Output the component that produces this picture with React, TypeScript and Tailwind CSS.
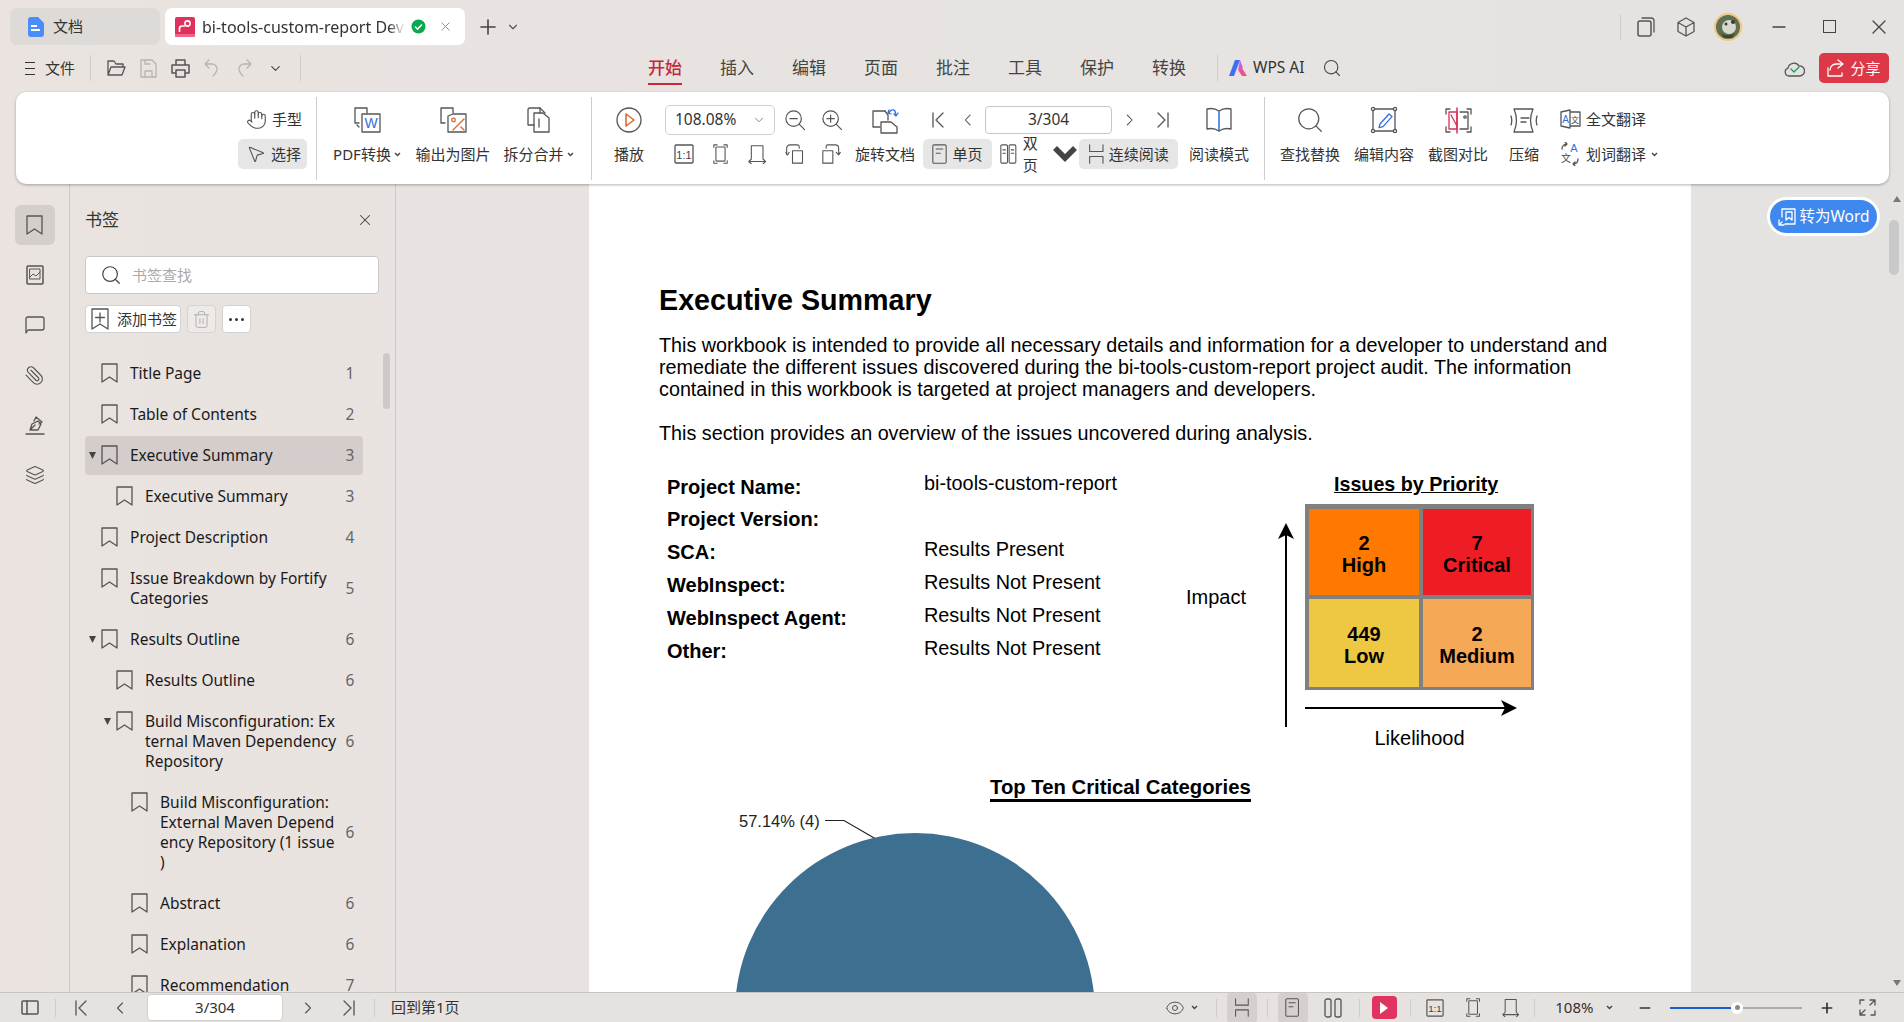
import * as React from "react";
import clsx from "clsx";
import {
  ChevronDown,
  ChevronLeft,
  ChevronRight,
  Eye,
  Hand,
  Layers,
  Minus,
  MousePointer2,
  Paperclip,
  Plus,
  Search,
  Trash2,
  X,
} from "lucide-react";

const ink = "#555555";

function Ic({ w, h, sw = 1.3, stroke = ink, children }: { w: number; h: number; sw?: number; stroke?: string; children: React.ReactNode }) {
  return (
    <svg width={w} height={h} viewBox={`0 0 ${w} ${h}`} fill="none" stroke={stroke} strokeWidth={sw} strokeLinecap="round" strokeLinejoin="round" className="shrink-0">
      {children}
    </svg>
  );
}

function Caret() {
  return (
    <svg width="7" height="5" viewBox="0 0 7 5" fill="none" stroke="#444" strokeWidth="1.4" className="shrink-0">
      <path d="M1 1l2.5 2.5L6 1" />
    </svg>
  );
}

function Sep({ className }: { className: string }) {
  return <div className={clsx("w-px shrink-0 bg-[#d0ccca]", className)} />;
}

function BackDoc() {
  return <path d="M13 6V1H1v15h4" />;
}

function PdfWordIcon() {
  return (
    <Ic w={27} h={26}>
      <BackDoc />
      <rect x="8" y="7" width="18" height="18" />
      <path d="M3 18l2 2" />
      <text x="17" y="21" textAnchor="middle" fontSize="14" fill="#2f6fe0" stroke="none" fontFamily="Liberation Sans">W</text>
    </Ic>
  );
}

function PdfImageIcon() {
  return (
    <Ic w={27} h={26}>
      <BackDoc />
      <path d="M8 25V9l5-2h13v18z" />
      <circle cx="13.5" cy="13" r="1.8" stroke="#d9652b" />
      <path d="M24 12L13 23" stroke="#d9652b" />
      <path d="M21 20l3 3" stroke="#d9652b" />
    </Ic>
  );
}

function SplitIcon() {
  return (
    <Ic w={24} h={26}>
      <path d="M13 6V1H3a2 2 0 00-2 2v15h6" />
      <path d="M13 1l5 5" />
      <path d="M7 6h9l6 5v14H7z" />
      <path d="M12 12v8" />
    </Ic>
  );
}

function PlayIcon() {
  return (
    <Ic w={26} h={26}>
      <circle cx="13" cy="13" r="12" />
      <path d="M10 7l8 6-8 6z" stroke="#d9652b" strokeWidth="1.5" />
    </Ic>
  );
}

function RotateDocIcon() {
  return (
    <Ic w={27} h={27}>
      <path d="M13 4H1v16h7" />
      <path d="M13 4l3 4v5" />
      <path d="M9 15h10l6 5v6H9z" />
      <path d="M17 6c1-3 4-4 6-2l1 4" stroke="#2f6fe0" />
      <path d="M17 3l-1 3 3 1M22 7l2 2 2-3" stroke="#2f6fe0" />
    </Ic>
  );
}

function BookIcon() {
  return (
    <Ic w={26} h={26}>
      <path d="M13 4C10 2 5 1 1 2v20c4-1 9 0 12 2 3-2 8-3 12-2V2c-4-1-9 0-12 2z" />
      <path d="M13 4v20" stroke="#2f6fe0" strokeWidth="1.5" />
    </Ic>
  );
}

function EditIcon() {
  return (
    <Ic w={28} h={28}>
      <path d="M5 3h18M5 25h18M3 5v18M25 5v18" />
      <circle cx="3" cy="3" r="1.6" />
      <circle cx="25" cy="3" r="1.6" />
      <circle cx="3" cy="25" r="1.6" />
      <circle cx="25" cy="25" r="1.6" />
      <path d="M10 18l9-10 3 2.6-9 10-4 1z" stroke="#2f6fe0" />
    </Ic>
  );
}

function CompareIcon() {
  return (
    <Ic w={27} h={27}>
      <path d="M5 2H1v5M22 2h4v5M5 25H1v-5M22 25h4v-5" />
      <path d="M4 5h8v17H4zM6 8l6 11" stroke="#d93052" />
      <path d="M12 1v25" stroke="#d93052" strokeWidth="1.5" />
      <path d="M15 5h8v17h-8" />
      <circle cx="20" cy="10" r="1.2" />
    </Ic>
  );
}

function CompressIcon() {
  return (
    <Ic w={28} h={27}>
      <path d="M4 2h19c-3 7-3 16 0 23H4c3-7 3-16 0-23z" />
      <path d="M11 11h8M11 15h5" />
      <path d="M1 9c1 3 1 6 0 9M27 9c-1 3-1 6 0 9" />
    </Ic>
  );
}

function OneToOneIcon() {
  return (
    <Ic w={20} h={20}>
      <rect x="1" y="1" width="18" height="18" rx="1" />
      <text x="10" y="14.5" textAnchor="middle" fontSize="11" fill="#444" stroke="none" fontFamily="Liberation Sans">1:1</text>
    </Ic>
  );
}

function FitPageIcon() {
  return (
    <Ic w={18} h={24}>
      <path d="M1 4V1h4M13 1h4v3M1 20v3h4M13 23h4v-3" />
      <rect x="3.5" y="3.5" width="11" height="17" rx="1" />
    </Ic>
  );
}

function FitWidthIcon() {
  return (
    <Ic w={22} h={24}>
      <path d="M4 17V2h14v15" />
      <path d="M1 21h20M4 18l-3 3 3 3M18 18l3 3-3 3" />
    </Ic>
  );
}

function RotateLeftIcon() {
  return (
    <Ic w={22} h={24}>
      <rect x="9" y="8" width="12" height="15" />
      <path d="M17 5V3a2 2 0 00-2-2H6a4 4 0 00-4 4v8M1 10l2 3 2-3" />
    </Ic>
  );
}

function RotateRightIcon() {
  return (
    <Ic w={22} h={24}>
      <rect x="1" y="8" width="12" height="15" />
      <path d="M5 5V3a2 2 0 012-2h9a4 4 0 014 4v8M17 10l3 3 2-3" />
    </Ic>
  );
}

function SinglePageIcon() {
  return (
    <Ic w={18} h={24}>
      <rect x="1" y="1" width="16" height="22" rx="1.5" />
      <path d="M5 6h8M5 11h5" />
    </Ic>
  );
}

function TwoPageIcon() {
  return (
    <Ic w={20} h={24}>
      <rect x="1" y="1" width="8" height="22" rx="1.5" />
      <rect x="11" y="1" width="8" height="22" rx="1.5" />
      <path d="M3.5 7h3M3.5 11h3M13.5 7h3M13.5 11h3" />
    </Ic>
  );
}

function ContinuousIcon() {
  return (
    <Ic w={20} h={24}>
      <path d="M2 1v8h16V1M2 23v-8h16v8" />
    </Ic>
  );
}

function ZoomIcon({ plus }: { plus?: boolean }) {
  return (
    <Ic w={22} h={22}>
      <circle cx="9.5" cy="9.5" r="8.5" />
      <path d="M15.5 15.5l6 6M5.5 9.5h8" />
      {plus && <path d="M9.5 5.5v8" />}
    </Ic>
  );
}

function TranslateIcon() {
  return (
    <Ic w={21} h={20}>
      <path d="M1 3l9-2v18l-9-2zM10 3h10v14H10" />
      <text x="5.5" y="13.5" textAnchor="middle" fontSize="10" fill="#2f6fe0" stroke="none" fontFamily="Liberation Sans">A</text>
      <text x="15" y="13.5" textAnchor="middle" fontSize="8" fill="#444" stroke="none" fontFamily="Noto Sans CJK SC">文</text>
    </Ic>
  );
}

function WordPickIcon() {
  return (
    <Ic w={20} h={24}>
      <path d="M2 7c0-3 2-5 5-5M5 0l2 2-2 2M18 17c0 3-2 5-5 5M15 24l-2-2 2-2" />
      <text x="14" y="10" textAnchor="middle" fontSize="11" fill="#2f6fe0" stroke="none" fontFamily="Liberation Sans">A</text>
      <text x="6" y="20" textAnchor="middle" fontSize="10" fill="#444" stroke="none" fontFamily="Noto Sans CJK SC">文</text>
    </Ic>
  );
}

function BookmarkIcon() {
  return (
    <Ic w={17} h={20}>
      <path d="M1 1h15v18l-7.5-5L1 19z" />
    </Ic>
  );
}

function FirstIcon() {
  return (
    <Ic w={12} h={16}>
      <path d="M1 1v14M11 1L4 8l7 7" />
    </Ic>
  );
}

function LastIcon() {
  return (
    <Ic w={12} h={16}>
      <path d="M11 1v14M1 1l7 7-7 7" />
    </Ic>
  );
}

function TabStrip() {
  return (
    <div className="flex h-[48px] shrink-0 items-center pt-[5px]">
      <div className="ml-[10px] flex h-[37px] w-[150px] items-center rounded-[7px] bg-[#dedad8] pl-[16px]">
        <svg width="20" height="20" viewBox="0 0 20 20" className="shrink-0">
          <path d="M2 3a3 3 0 013-3h7l6 6v11a3 3 0 01-3 3H5a3 3 0 01-3-3z" fill="#4a8df8" />
          <rect x="5" y="8" width="6" height="2" fill="#fff" />
          <rect x="5" y="12" width="9" height="2" fill="#fff" />
        </svg>
        <span className="ml-[7px] text-[15px] text-[#333]">文档</span>
      </div>
      <div className="ml-[5px] flex h-[37px] w-[300px] items-center rounded-[7px] bg-white pl-[10px]">
        <svg width="20" height="20" viewBox="0 0 20 20" className="shrink-0">
          <rect width="20" height="20" rx="2" fill="#e0305c" />
          <rect y="17" width="20" height="3" fill="#f2648a" />
          <circle cx="12.5" cy="6.5" r="2.6" fill="none" stroke="#fff" strokeWidth="1.6" />
          <path d="M10 9H7a2.5 2.5 0 00-2.5 2.5V15" fill="none" stroke="#fff" strokeWidth="1.6" />
        </svg>
        <span className="ml-[7px] w-[203px] overflow-hidden whitespace-nowrap text-[16px] text-[#333] [mask-image:linear-gradient(to_right,black_92%,transparent)]">
          bi-tools-custom-report Development
        </span>
        <svg width="15" height="15" viewBox="0 0 15 15" className="ml-[6px] shrink-0">
          <circle cx="7.5" cy="7.5" r="7" fill="#0aa74f" />
          <path d="M4 7.5l2.5 2.5L11 5.5" fill="none" stroke="#fff" strokeWidth="1.6" />
        </svg>
        <X size={15} strokeWidth={1.5} color="#8a8a8a" className="ml-[12px]" />
      </div>
      <Plus size={24} strokeWidth={1.6} color="#444" className="ml-[11px]" />
      <ChevronDown size={14} strokeWidth={2} color="#555" className="ml-[6px]" />
      <div className="ml-auto flex items-center">
        <Sep className="h-[26px]" />
        <div className="ml-[5px] flex w-[40px] justify-center">
          <Ic w={18} h={20}>
            <rect x="1" y="4" width="13" height="15" rx="2" strokeWidth="1.5" />
            <path d="M5 1h9a3 3 0 013 3v11" />
          </Ic>
        </div>
        <div className="flex w-[40px] justify-center">
          <Ic w={18} h={20}>
            <path d="M9 1l8 4.5v9L9 19l-8-4.5v-9zM1 5.5L9 10l8-4.5M9 10v9" />
          </Ic>
        </div>
        <div className="flex w-[44px] justify-center">
          <svg width="28" height="28" viewBox="0 0 28 28">
            <circle cx="14" cy="14" r="13" fill="#5f7050" stroke="#f2c781" strokeWidth="2" />
            <ellipse cx="15" cy="14" rx="7" ry="7" fill="#d8d8cf" />
            <circle cx="19" cy="9" r="2" fill="#3a3a34" />
            <circle cx="12" cy="11" r="1.5" fill="#3a3a34" />
            <path d="M7 20c4 3 10 3 14 0l-3 5h-8z" fill="#3c4632" />
          </svg>
        </div>
        <div className="ml-[4px] flex w-[50px] justify-center">
          <Ic w={14} h={2} stroke="#444">
            <path d="M1 1h12" />
          </Ic>
        </div>
        <div className="flex w-[50px] justify-center">
          <div className="h-[13px] w-[13px] border-[1.5px] border-[#444]" />
        </div>
        <div className="flex w-[50px] justify-center">
          <Ic w={14} h={14} stroke="#444">
            <path d="M1 1l12 12M13 1L1 13" />
          </Ic>
        </div>
      </div>
    </div>
  );
}

const menus = ["开始", "插入", "编辑", "页面", "批注", "工具", "保护", "转换"];

function MenuBar() {
  return (
    <div className="flex h-[44px] shrink-0 items-center pb-[4px]">
      <div className="ml-[25px] flex w-[10px] flex-col gap-[5px]">
        <div className="h-px bg-[#333]" />
        <div className="h-px bg-[#333]" />
        <div className="h-px bg-[#333]" />
      </div>
      <span className="ml-[10px] w-[30px] text-[15px] text-[#333]">文件</span>
      <Sep className="ml-[15px] h-[26px]" />
      <div className="ml-[15px] flex w-[20px] justify-center">
        <Ic w={19} h={17}>
          <path d="M1 15V1h6l2 3h7v3M1 15l3-8h14l-3 8z" />
        </Ic>
      </div>
      <div className="ml-[12px] flex w-[20px] justify-center">
        <Ic w={17} h={19} stroke="#b8b4b2">
          <path d="M1 1h11l4 4v13H1zM5 18v-6h7v6M5 1v4h5" />
        </Ic>
      </div>
      <div className="ml-[12px] flex w-[20px] justify-center">
        <Ic w={19} h={19} sw={1.5}>
          <path d="M5 6V1h9v5M5 14H1V6h17v8h-4M5 11h9v7H5z" />
        </Ic>
      </div>
      <div className="ml-[11px] flex w-[20px] justify-center">
        <Ic w={15} h={18} stroke="#b8b4b2">
          <path d="M5 1L1 5l4 4M1 5h7a5 5 0 015 5c0 3-2 5-4 7" />
        </Ic>
      </div>
      <div className="ml-[13px] flex w-[20px] justify-center">
        <Ic w={15} h={18} stroke="#b8b4b2">
          <path d="M10 1l4 4-4 4M14 5H7a5 5 0 00-5 5c0 3 2 5 4 7" />
        </Ic>
      </div>
      <ChevronDown size={15} strokeWidth={1.8} color="#444" className="ml-[14px]" />
      <Sep className="ml-[17px] h-[26px]" />
      <div className="ml-[347px] flex gap-[38px]">
        {menus.map((m, i) => (
          <div
            key={m}
            className={clsx(
              "flex h-[34px] w-[34px] items-center justify-center border-b-2 pt-[2px] text-[17px] whitespace-nowrap",
              i === 0 ? "border-[#c4283a] font-medium text-[#c4283a]" : "border-transparent text-[#444]"
            )}
          >
            {m}
          </div>
        ))}
      </div>
      <Sep className="ml-[31px] h-[26px]" />
      <svg width="20" height="18" viewBox="0 0 20 18" className="ml-[10px] shrink-0">
        <path d="M7 1h5l-6 16H1z" fill="#3f6ef0" />
        <path d="M12 1l3 8-5 2z" fill="#c65be8" />
        <path d="M10 11l4-2 5 8h-5z" fill="#f0538a" />
      </svg>
      <span className="ml-[5px] text-[15.5px] text-[#333]">WPS AI</span>
      <Search size={20} strokeWidth={1.3} color="#444" className="ml-[17px]" />
      <div className="ml-auto flex items-center">
        <Ic w={21} h={17}>
          <path d="M5 16a4 4 0 01-1-7.8A6 6 0 0115 6a5 5 0 011 10z" />
          <path d="M7 9l3 3 5-5" stroke="#12a150" />
        </Ic>
        <div className="mr-[15px] ml-[14px] flex h-[30px] w-[70px] items-center justify-center gap-[5px] rounded-[5px] bg-[#dc3847] text-[15px] text-white">
          <Ic w={18} h={18} stroke="#fff">
            <path d="M11 1l5 4-5 4M16 5H9a6 6 0 00-6 6M1 9v8h14v-3" />
          </Ic>
          分享
        </div>
      </div>
    </div>
  );
}

function BigBtn({ className, icon, label, caret }: { className: string; icon: React.ReactNode; label: string; caret?: boolean }) {
  return (
    <div className={clsx("flex shrink-0 flex-col items-center", className)}>
      <div className="flex h-[34px] items-center justify-center">{icon}</div>
      <div className="mt-[2px] flex h-[30px] items-center gap-[3px] whitespace-nowrap">
        {label}
        {caret && <Caret />}
      </div>
    </div>
  );
}

function IconCell({ children }: { children: React.ReactNode }) {
  return <div className="flex w-[37px] shrink-0 items-center justify-center [&>svg]:h-[20px] [&>svg]:w-auto">{children}</div>;
}

function Ribbon() {
  return (
    <div className="relative z-10 ml-[16px] flex h-[92px] w-[1873px] shrink-0 rounded-[10px] bg-white pt-[11px] text-[15px] text-[#333] shadow-[0_1px_3px_rgba(0,0,0,0.3)]">
      <div className="ml-[222px] flex w-[69px] shrink-0 flex-col">
        <div className="flex h-[34px] items-center gap-[5px] pb-[2px] pl-[8px]">
          <Hand size={21} strokeWidth={1.3} color={ink} />
          手型
        </div>
        <div className="mt-[2px] flex h-[30px] items-center gap-[5px] rounded-[5px] bg-[#e6e6e6] pl-[8px]">
          <MousePointer2 size={20} strokeWidth={1.3} color={ink} />
          选择
        </div>
      </div>
      <Sep className="-mt-[6px] ml-[9px] h-[83px]" />
      <BigBtn className="ml-[7px] w-[86px]" icon={<PdfWordIcon />} label="PDF转换" caret />
      <BigBtn className="w-[86px]" icon={<PdfImageIcon />} label="输出为图片" />
      <BigBtn className="w-[85px]" icon={<SplitIcon />} label="拆分合并" caret />
      <Sep className="-mt-[6px] ml-[10px] h-[83px]" />
      <BigBtn className="ml-[1px] w-[72px]" icon={<PlayIcon />} label="播放" />
      <div className="flex w-[185px] shrink-0 flex-col">
        <div className="flex h-[34px] items-center">
          <div className="flex h-[30px] w-[110px] shrink-0 items-center justify-between rounded-[5px] border border-[#cfcfcf] pr-[8px] pl-[9px] text-[15.5px]">
            108.08%
            <ChevronDown size={14} strokeWidth={1.5} color="#777" />
          </div>
          <div className="w-px" />
          <IconCell>
            <ZoomIcon />
          </IconCell>
          <IconCell>
            <ZoomIcon plus />
          </IconCell>
        </div>
        <div className="mt-[2px] flex h-[30px] items-center">
          <IconCell><OneToOneIcon /></IconCell>
          <IconCell><FitPageIcon /></IconCell>
          <IconCell><FitWidthIcon /></IconCell>
          <IconCell><RotateLeftIcon /></IconCell>
          <IconCell><RotateRightIcon /></IconCell>
        </div>
      </div>
      <BigBtn className="w-[70px]" icon={<RotateDocIcon />} label="旋转文档" />
      <div className="flex w-[258px] shrink-0 flex-col">
        <div className="flex h-[34px] items-center">
          <div className="ml-[3px] flex w-[30px] justify-center"><FirstIcon /></div>
          <ChevronLeft size={20} strokeWidth={1.3} color={ink} className="ml-[6px]" />
          <div className="ml-[8px] flex h-[28px] w-[130px] items-center justify-center rounded-[4px] border border-[#c6c6c6] text-[15.5px]">3/304</div>
          <ChevronRight size={20} strokeWidth={1.3} color={ink} className="ml-[8px]" />
          <div className="ml-[8px] flex w-[32px] justify-center"><LastIcon /></div>
        </div>
        <div className="mt-[2px] flex h-[30px] items-center [&_svg]:h-[20px] [&_svg]:w-auto">
          <div className="ml-[3px] flex h-[30px] w-[69px] items-center justify-center gap-[5px] rounded-[5px] bg-[#e6e6e6]">
            <SinglePageIcon />
            单页
          </div>
          <div className="flex w-[87px] items-center pl-[8px]">
            <TwoPageIcon />
            <span className="ml-[6px]">双页</span>
            <span className="ml-[5px] [&_svg]:h-[5px]"><Caret /></span>
          </div>
          <div className="flex h-[30px] w-[99px] items-center justify-center gap-[4px] rounded-[5px] bg-[#e6e6e6]">
            <ContinuousIcon />
            连续阅读
          </div>
        </div>
      </div>
      <BigBtn className="w-[82px]" icon={<BookIcon />} label="阅读模式" />
      <Sep className="-mt-[6px] ml-[4px] h-[83px]" />
      <BigBtn className="ml-[8px] w-[74px]" icon={<Search size={30} strokeWidth={1} color={ink} />} label="查找替换" />
      <BigBtn className="w-[74px]" icon={<EditIcon />} label="编辑内容" />
      <BigBtn className="w-[74px]" icon={<CompareIcon />} label="截图对比" />
      <BigBtn className="w-[58px]" icon={<CompressIcon />} label="压缩" />
      <div className="ml-[7px] flex shrink-0 flex-col">
        <div className="flex h-[34px] items-center gap-[5px] pb-[2px]">
          <TranslateIcon />
          全文翻译
        </div>
        <div className="mt-[2px] flex h-[30px] items-center gap-[5px]">
          <WordPickIcon />
          <span className="ml-[1px]">划词翻译</span>
          <Caret />
        </div>
      </div>
    </div>
  );
}

const railIcons = [
  <BookmarkIcon key="b" />,
  <Ic key="t" w={18} h={20} sw={1.5}>
    <rect x="1" y="1" width="16" height="18" rx="1" />
    <path d="M4 4h10v10H4zM4 12l3-3 3 2 4-4" strokeWidth="1" />
  </Ic>,
  <Ic key="c" w={20} h={18}>
    <path d="M1 3a2 2 0 012-2h14a2 2 0 012 2v9a2 2 0 01-2 2H3l-2 3z" />
  </Ic>,
  <Paperclip key="p" size={21} strokeWidth={1.3} color={ink} className="-scale-x-100" />,
  <Ic key="s" w={20} h={20}>
    <path d="M1 19h18M5 15l2-6 6-3 3 3-3 6zM9 6l2-4 6 5-3 2M5 15l5-5" />
  </Ic>,
  <Layers key="l" size={20} strokeWidth={1.3} color={ink} />,
];

function Rail() {
  return (
    <div className="flex w-[70px] shrink-0 flex-col items-center gap-[10px] border-r border-[#cfcac8] pt-[21px]">
      {railIcons.map((icon, i) => (
        <div key={i} className={clsx("flex h-[40px] w-[40px] items-center justify-center rounded-[6px]", i === 0 && "bg-[#d5cfcc]")}>
          {icon}
        </div>
      ))}
    </div>
  );
}

type TreeRow = { lv: 0 | 1 | 2; lines: string[]; n: number; open?: boolean; active?: boolean };

const tree: TreeRow[] = [
  { lv: 0, lines: ["Title Page"], n: 1 },
  { lv: 0, lines: ["Table of Contents"], n: 2 },
  { lv: 0, lines: ["Executive Summary"], n: 3, open: true, active: true },
  { lv: 1, lines: ["Executive Summary"], n: 3 },
  { lv: 0, lines: ["Project Description"], n: 4 },
  { lv: 0, lines: ["Issue Breakdown by Fortify", "Categories"], n: 5 },
  { lv: 0, lines: ["Results Outline"], n: 6, open: true },
  { lv: 1, lines: ["Results Outline"], n: 6 },
  { lv: 1, lines: ["Build Misconfiguration: Ex", "ternal Maven Dependency", "Repository"], n: 6, open: true },
  { lv: 2, lines: ["Build Misconfiguration:", "External Maven Depend", "ency Repository (1 issue", ")"], n: 6 },
  { lv: 2, lines: ["Abstract"], n: 6 },
  { lv: 2, lines: ["Explanation"], n: 6 },
  { lv: 2, lines: ["Recommendation"], n: 7 },
];

const levelPad = ["pl-[1px]", "pl-[16px]", "pl-[31px]"];

function Sidebar() {
  return (
    <div className="flex w-[326px] shrink-0 flex-col overflow-hidden border-r border-[#cfcac8] pl-[15px]">
      <div className="flex h-[72px] shrink-0 items-center justify-between pr-[21px]">
        <span className="text-[17px] text-[#333]">书签</span>
        <X size={18} strokeWidth={1.4} color="#444" />
      </div>
      <div className="flex h-[38px] w-[294px] shrink-0 items-center rounded-[4px] border border-[#c9c9c9] bg-white pl-[14px]">
        <Search size={22} strokeWidth={1.3} color="#444" />
        <span className="ml-[10px] text-[15px] text-[#aaa]">书签查找</span>
      </div>
      <div className="mt-[11px] flex h-[28px] shrink-0 gap-[6px]">
        <div className="flex w-[96px] items-center rounded-[4px] border border-[#d2d2d2] bg-white pl-[5px] text-[15px] text-[#333]">
          <Ic w={18} h={22}>
            <path d="M1 1h16v20l-8-5-8 5zM9 5v9M4.5 9.5h9" />
          </Ic>
          <span className="ml-[8px]">添加书签</span>
        </div>
        <div className="flex w-[29px] items-center justify-center rounded-[4px] border border-[#d8d3d1] bg-[#eeeae8]">
          <Trash2 size={19} strokeWidth={1.1} color="#aaa" />
        </div>
        <div className="flex w-[29px] items-center justify-center gap-[3px] rounded-[4px] border border-[#d2d2d2] bg-white">
          <div className="h-[3px] w-[3px] rounded-full bg-[#333]" />
          <div className="h-[3px] w-[3px] rounded-full bg-[#333]" />
          <div className="h-[3px] w-[3px] rounded-full bg-[#333]" />
        </div>
      </div>
      <div className="mt-[19.5px] flex shrink-0">
        <div className="w-[278px] shrink-0">
          {tree.map((r, i) => (
            <div key={i} className="py-px">
              <div className={clsx("flex items-center rounded-[4px] py-[9.5px] pr-[3px]", r.active && "bg-[#d4cdcb]", levelPad[r.lv])}>
                <div className="flex flex-1 items-start">
                  <div className="flex h-[20px] w-[15px] shrink-0 items-center pl-[3px]">
                    {r.open && (
                      <svg width="7" height="7" viewBox="0 0 7 7" fill="#444">
                        <path d="M0 0h7L3.5 7z" />
                      </svg>
                    )}
                  </div>
                  <BookmarkIcon />
                  <div className="ml-[12px] text-[15.5px] leading-[20px] whitespace-pre text-[#1a1a1a]">{r.lines.join("\n")}</div>
                </div>
                <div className="w-[20px] shrink-0 text-center text-[15.5px] leading-[20px] text-[#666]">{r.n}</div>
              </div>
            </div>
          ))}
        </div>
        <div className="ml-[20px] h-[56px] w-[7px] rounded-[4px] bg-[#cdc9c7]" />
      </div>
    </div>
  );
}

const overview = [
  { label: "Project Name:", value: "bi-tools-custom-report", row: "h-[32px]", val: "pb-[6px]" },
  { label: "Project Version:", value: "", row: "h-[32px]", val: "" },
  { label: "SCA:", value: "Results Present", row: "h-[33px]", val: "pb-[3px]" },
  { label: "WebInspect:", value: "Results Not Present", row: "h-[33px]", val: "pb-[3px]" },
  { label: "WebInspect Agent:", value: "Results Not Present", row: "h-[33px]", val: "pb-[3px]" },
  { label: "Other:", value: "Results Not Present", row: "h-[33px]", val: "pb-[3px]" },
];

function Matrix() {
  const cells = [
    ["2", "High", "bg-[#ff7900]"],
    ["7", "Critical", "bg-[#ee1c25]"],
    ["449", "Low", "bg-[#eec843]"],
    ["2", "Medium", "bg-[#f5a855]"],
  ];
  return (
    <div className="grid h-[186px] w-[229px] grid-cols-[110px_108px] grid-rows-[86px_88px] gap-[4px] bg-[#808080] pt-[5px] pl-[4px]">
      {cells.map(([n, name, bg]) => (
        <div key={name} className={clsx("flex flex-col items-center justify-center pt-[3px] text-[20px] leading-[22px] font-bold text-black", bg)}>
          <span>{n}</span>
          <span>{name}</span>
        </div>
      ))}
    </div>
  );
}

function PageContent() {
  return (
    <div className="ml-[193px] h-full w-[1102px] shrink-0 overflow-hidden bg-white pt-[100px] pl-[70px] font-['Liberation_Sans',sans-serif] text-black">
      <h1 className="text-[28.7px] leading-[32px] font-bold">Executive Summary</h1>
      <div className="mt-[18px] text-[19.78px] leading-[22px] whitespace-pre">
        <p>{"This workbook is intended to provide all necessary details and information for a developer to understand and\nremediate the different issues discovered during the bi-tools-custom-report project audit. The information\ncontained in this workbook is targeted at project managers and developers."}</p>
        <p className="mt-[22px]">This section provides an overview of the issues uncovered during analysis.</p>
      </div>
      <div className="mt-[28px] flex items-start">
        <div className="-mt-px ml-[8px] w-[519px] shrink-0">
          {overview.map((r) => (
            <div key={r.label} className={clsx("flex items-center", r.row)}>
              <div className="w-[257px] shrink-0 text-[20px] font-bold">{r.label}</div>
              <div className={clsx("text-[19.85px]", r.val)}>{r.value}</div>
            </div>
          ))}
        </div>
        <div className="w-[92px] shrink-0 pt-[113px] text-[20px] leading-[24px]">Impact</div>
        <svg width="16" height="204" viewBox="0 0 16 204" className="mt-[51px] shrink-0">
          <path d="M8 10v194" stroke="#000" strokeWidth="2" />
          <path d="M8 0l8 16-8-4-8 4z" fill="#000" />
        </svg>
        <div className="ml-[11px] flex w-[229px] shrink-0 flex-col">
          <div className="pl-[29px] text-[19.7px] leading-[24px] font-bold underline">Issues by Priority</div>
          <div className="mt-[8px]">
            <Matrix />
          </div>
          <svg width="212" height="16" viewBox="0 0 212 16" className="mt-[10px]">
            <path d="M0 8h200" stroke="#000" strokeWidth="2" />
            <path d="M212 8L196 0l4 8-4 8z" fill="#000" />
          </svg>
          <div className="mt-[10px] text-center text-[20px] leading-[24px]">Likelihood</div>
        </div>
      </div>
      <div className="mt-[26px] ml-[331px] w-fit border-b-[3px] border-black text-[20.3px] leading-[23px] font-bold">Top Ten Critical Categories</div>
      <svg width="370" height="370" viewBox="0 0 370 370" className="mt-[9px] ml-[76px]">
        <text x="4" y="16" fontFamily="Liberation Sans" fontSize="16.5" fill="#222">57.14% (4)</text>
        <path d="M90 9.5h19l31 18" fill="none" stroke="#222" strokeWidth="1.2" />
        <circle cx="180" cy="202" r="180" fill="#3d6f90" />
      </svg>
    </div>
  );
}

function DocArea() {
  return (
    <div className="flex h-full min-w-0 flex-1">
      <PageContent />
      <div className="w-[198px] shrink-0 pt-[13px] pl-[76px]">
        <div className="flex h-[39px] w-[113px] items-center justify-center gap-[3px] rounded-full border-[3px] border-white bg-[#3f88ed] text-[15.5px] text-white">
          <Ic w={19} h={19} stroke="#fff">
            <path d="M5 10V2h13v15H8M2 13v5h5M5 15l-3 3" />
            <path d="M9 5h6v8l-3-2.5L9 13z" />
          </Ic>
          转为Word
        </div>
      </div>
      <div className="flex w-[15px] shrink-0 flex-col items-center pt-[12px] pb-[6px]">
        <div className="h-0 w-0 border-x-[4px] border-b-[6px] border-x-transparent border-b-[#777]" />
        <div className="mt-[18px] mr-[5px] h-[55px] w-[10px] rounded-[5px] bg-[#c9c9c9]" />
        <div className="mt-auto h-0 w-0 border-x-[4px] border-t-[6px] border-x-transparent border-t-[#777]" />
      </div>
    </div>
  );
}

function StatusBar() {
  return (
    <div className="flex h-[30px] shrink-0 items-center border-t border-[#c9c5c3] bg-[#e6e2e0] text-[#333]">
      <div className="ml-[21px] flex w-[18px] justify-center">
        <Ic w={18} h={15} sw={1.5}>
          <rect x="1" y="1" width="16" height="13" rx="1" />
          <path d="M6 1v13" />
        </Ic>
      </div>
      <Sep className="ml-[16px] h-[18px]" />
      <div className="ml-[19px]"><FirstIcon /></div>
      <ChevronLeft size={20} strokeWidth={1.3} color={ink} className="ml-[23px]" />
      <div className="ml-[17px] flex h-[27px] w-[136px] items-center justify-center rounded-[4px] border border-[#cfcfcf] bg-white text-[15px]">3/304</div>
      <ChevronRight size={20} strokeWidth={1.3} color={ink} className="ml-[15px]" />
      <div className="ml-[25px]"><LastIcon /></div>
      <Sep className="ml-[19px] h-[18px]" />
      <span className="ml-[16px] text-[15px]">回到第1页</span>
      <Eye size={20} strokeWidth={1.2} color={ink} className="ml-[705px]" />
      <span className="ml-[6px]"><Caret /></span>
      <Sep className="ml-[18px] h-[18px]" />
      <div className="ml-[10px] flex h-[30px] w-[30px] items-center justify-center rounded-[4px] bg-[#d5d0cd] [&>svg]:h-[19px] [&>svg]:w-auto">
        <ContinuousIcon />
      </div>
      <Sep className="ml-[10px] h-[18px]" />
      <div className="ml-[10px] flex h-[30px] w-[30px] items-center justify-center rounded-[4px] bg-[#d5d0cd] [&>svg]:h-[19px] [&>svg]:w-auto">
        <SinglePageIcon />
      </div>
      <div className="ml-[16px]">
        <Ic w={18} h={20}>
          <rect x="1" y="1" width="6" height="18" rx="2" />
          <rect x="11" y="1" width="6" height="18" rx="2" />
        </Ic>
      </div>
      <Sep className="ml-[17px] h-[18px]" />
      <div className="ml-[12px] flex h-[23px] w-[25px] items-center justify-center rounded-[4px] bg-[#e0335f]">
        <div className="h-0 w-0 border-y-[6px] border-l-[8px] border-y-transparent border-l-white" />
      </div>
      <Sep className="ml-[13px] h-[18px]" />
      <div className="ml-[15px] [&>svg]:h-[18px] [&>svg]:w-auto"><OneToOneIcon /></div>
      <div className="ml-[22px] [&>svg]:h-[19px] [&>svg]:w-auto"><FitPageIcon /></div>
      <div className="ml-[22px] [&>svg]:h-[19px] [&>svg]:w-auto"><FitWidthIcon /></div>
      <Sep className="ml-[15px] h-[18px]" />
      <span className="ml-[20px] text-[15px]">108%</span>
      <span className="ml-[13px]"><Caret /></span>
      <Minus size={16} strokeWidth={2.5} color="#333" className="ml-[24px]" />
      <div className="ml-[17px] flex w-[132px] items-center">
        <div className="h-[2px] w-[61px] bg-[#1a5fc8]" />
        <div className="flex h-[12px] w-[12px] items-center justify-center rounded-full bg-white">
          <div className="h-[5px] w-[5px] rounded-full bg-[#888]" />
        </div>
        <div className="h-[2px] w-[59px] bg-[#aaa]" />
      </div>
      <Plus size={16} strokeWidth={2.5} color="#333" className="ml-[17px]" />
      <div className="ml-[24px]">
        <Ic w={17} h={17}>
          <path d="M11 1h5v5M16 1l-5 5M6 16H1v-5M1 16l5-5M1 5V1h4M16 12v4h-4" />
        </Ic>
      </div>
    </div>
  );
}

export default function App() {
  return (
    <div className="flex h-[1022px] w-[1904px] flex-col overflow-hidden bg-gradient-to-r from-[#eae3e0] to-[#e4e3e2] font-['Noto_Sans','Noto_Sans_CJK_SC',sans-serif]">
      <TabStrip />
      <MenuBar />
      <Ribbon />
      <div className="flex h-[808px] shrink-0">
        <Rail />
        <Sidebar />
        <DocArea />
      </div>
      <StatusBar />
    </div>
  );
}
